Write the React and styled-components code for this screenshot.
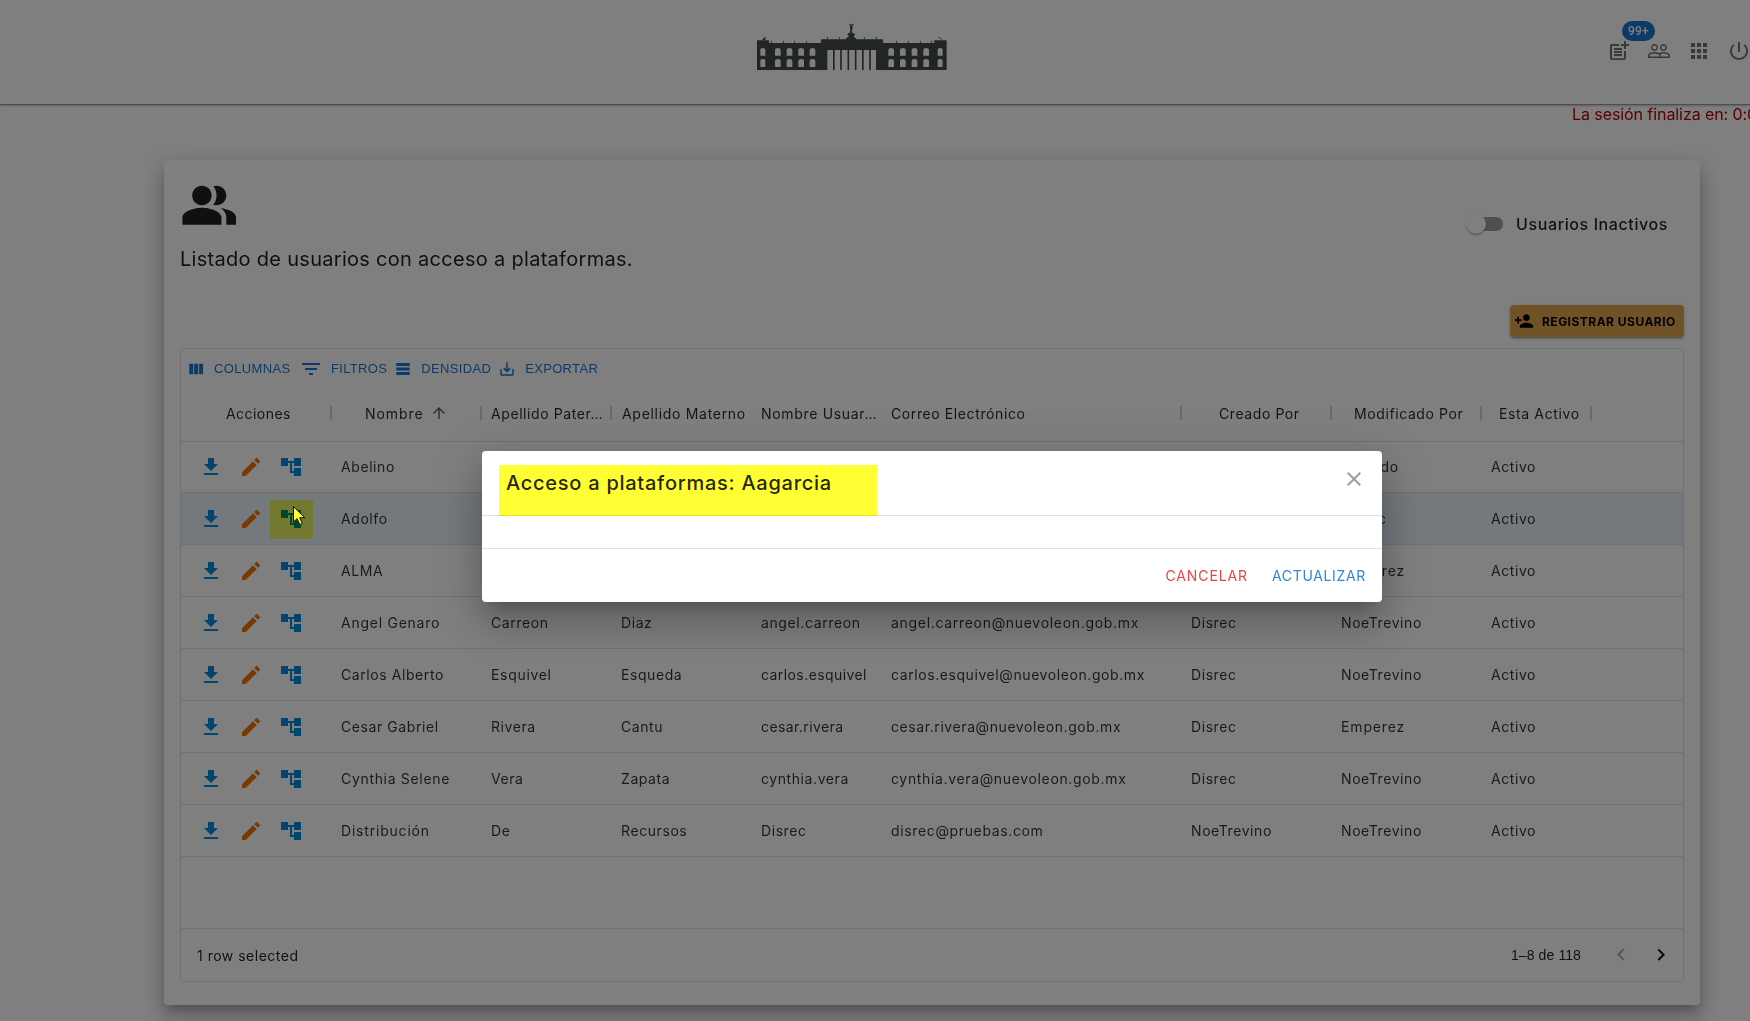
import React from "react";
import styled, { createGlobalStyle } from "styled-components";

const GlobalStyle = createGlobalStyle`
  *, *::before, *::after { box-sizing: border-box; }
  body {
    margin: 0;
    background: #fff;
    color: rgba(0, 0, 0, 0.87);
    font-family: Inter, "Open Sans", sans-serif;
    font-size: 14px;
    overflow: hidden;
  }
`;

const Page = styled.div`
  position: relative;
  width: 1750px;
  height: 1021px;
  overflow: hidden;
  background: #fff;
`;

const Header = styled.header`
  display: grid;
  grid-template-columns: 757px 190px 1fr;
  height: 105px;
  border-bottom: 1px solid #9a9a9a;
  box-shadow: 0 1px 2px rgba(0, 0, 0, 0.25);
`;

const LogoSlot = styled.div`
  grid-column: 2;
  padding-top: 22px;
  svg { display: block; }
`;

const HeaderTools = styled.nav`
  display: flex;
  gap: 16px;
  padding: 39px 0 0 660px;
  color: #757575;
`;

const Tool = styled.span`
  position: relative;
  flex: none;
  width: 24px;
  height: 24px;
`;

const Badge = styled.span`
  position: absolute;
  left: 15px;
  top: -18px;
  width: 33px;
  height: 20px;
  border-radius: 10px;
  background: #1976d2;
  color: #fff;
  font: 500 12px/20px Roboto, sans-serif;
  letter-spacing: 0.15px;
  text-align: center;
`;

const Glyph = styled.svg`
  display: block;
  flex: none;
  width: ${(p) => p.$size || 24}px;
  height: ${(p) => p.$size || 24}px;
  fill: currentColor;
  color: ${(p) => p.$color || "inherit"};
`;

const Session = styled.p`
  margin: 0 0 36px;
  padding-left: 1572px;
  height: 19px;
  font-size: 16px;
  line-height: 18px;
  letter-spacing: -0.08px;
  white-space: nowrap;
  overflow: hidden;
  color: #b50000;
`;

const Card = styled.main`
  display: flex;
  flex-direction: column;
  width: 1536px;
  height: 845px;
  margin-left: 164px;
  padding: 16px;
  border-radius: 4px;
  background: #fff;
  box-shadow: 0 7px 8px -4px rgba(0, 0, 0, 0.2), 0 12px 17px 2px rgba(0, 0, 0, 0.14),
    0 5px 22px 4px rgba(0, 0, 0, 0.12);
`;

const CardTop = styled.section`
  display: flex;
  justify-content: space-between;
  height: 129px;
`;

const Heading = styled.h1`
  margin: 8px 0 0;
  font-size: 20px;
  font-weight: 400;
  line-height: 32px;
  letter-spacing: 0.29px;
`;

const InactiveToggle = styled.label`
  display: flex;
  align-items: center;
  height: 20px;
  margin: 38px 16px 0 0;
  font-size: 16px;
  font-weight: 500;
  letter-spacing: 0.6px;
`;

const Track = styled.span`
  display: flex;
  align-items: center;
  width: 34px;
  height: 14px;
  margin-right: 13px;
  border-radius: 7px;
  background: #9e9e9e;
`;

const Thumb = styled.span`
  flex: none;
  width: 20px;
  height: 20px;
  margin-left: -3px;
  border-radius: 50%;
  background: #fff;
  box-shadow: 0 2px 1px -1px rgba(0, 0, 0, 0.2), 0 1px 1px rgba(0, 0, 0, 0.14),
    0 1px 3px rgba(0, 0, 0, 0.12);
`;

const RegisterButton = styled.button`
  display: flex;
  align-items: center;
  align-self: flex-end;
  gap: 8px;
  width: 174px;
  height: 32px;
  margin-bottom: 11px;
  padding: 0 0 0 4px;
  border: 0;
  border-radius: 4px;
  background: #dfa74f;
  color: #000;
  font: 700 12px Inter, sans-serif;
  letter-spacing: 0.48px;
  white-space: nowrap;
  box-shadow: 0 3px 1px -2px rgba(0, 0, 0, 0.2), 0 2px 2px rgba(0, 0, 0, 0.14),
    0 1px 5px rgba(0, 0, 0, 0.12);
`;

const Grid = styled.section`
  display: flex;
  flex-direction: column;
  height: 634px;
  border: 1px solid #e0e0e0;
  border-radius: 4px;
`;

const Toolbar = styled.div`
  display: flex;
  gap: 7px;
  height: 36px;
  padding: 4px 6px 0;
`;

const ToolbarButton = styled.button`
  display: flex;
  align-items: center;
  gap: ${(p) => p.$gap}px;
  height: 31px;
  margin-right: ${(p) => p.$trail || 0}px;
  padding: 0;
  border: 0;
  background: none;
  color: #1976d2;
  font: 13px "Liberation Sans", Arial, sans-serif;
  letter-spacing: 0.34px;
`;

const columns = "150px 150px 130px 140px 130px 300px 150px 150px 110px";

const HeadRow = styled.div`
  display: grid;
  grid-template-columns: ${columns};
  height: 57px;
  border-bottom: 1px solid #e0e0e0;
  font-weight: 430;
`;

const HeadCell = styled.div`
  display: flex;
  align-items: center;
  gap: 6px;
  height: 56px;
  padding-left: ${(p) => p.$indent}px;
  letter-spacing: ${(p) => p.$tracking}px;
  white-space: nowrap;
  color: rgba(0, 0, 0, 0.84);
  &::after {
    content: "";
    width: 2px;
    height: 14px;
    margin: 0 -1px 0 auto;
    background: #d2d2d2;
  }
`;

const Row = styled.div`
  display: grid;
  grid-template-columns: ${columns};
  align-items: center;
  height: 52px;
  margin-top: ${(p) => (p.$first ? -1 : 0)}px;
  border-bottom: 1px solid #e0e0e0;
  background: ${(p) => (p.$selected ? "rgba(25, 118, 210, 0.095)" : "none")};
`;

const Cell = styled.div`
  padding-left: 10px;
  letter-spacing: ${(p) => p.$tracking}px;
  white-space: nowrap;
  color: rgba(0, 0, 0, 0.8);
`;

const Actions = styled.div`
  display: flex;
  gap: 16px;
  padding-left: 18px;
`;

const Action = styled.span`
  width: 24px;
  height: 24px;
`;

const Footer = styled.footer`
  display: flex;
  align-items: center;
  height: 53px;
  margin-top: auto;
  padding: 0 10px 0 16px;
  border-top: 1px solid #e0e0e0;
`;

const Selected = styled.span`
  flex: 1;
  letter-spacing: 0.5px;
`;

const Range = styled.span`
  font: 14px "Liberation Sans", Arial, sans-serif;
  letter-spacing: 0.1px;
  margin-right: 28px;
`;

const Pager = styled.span`
  display: flex;
  gap: 16px;
  color: #111;
`;

const Backdrop = styled.div`
  position: absolute;
  inset: 0;
  background: rgba(0, 0, 0, 0.5);
`;

const Marker = styled.div`
  position: absolute;
  left: 270px;
  top: 500px;
  width: 43px;
  height: 39px;
  background: #ffff66;
  mix-blend-mode: multiply;
`;

const Pointer = styled.svg`
  position: absolute;
  left: 292px;
  top: 505px;
`;

const Dialog = styled.div`
  position: absolute;
  left: 482px;
  top: 451px;
  width: 900px;
  height: 151px;
  border-radius: 4px;
  background: #fff;
  box-shadow: 0 11px 15px -7px rgba(0, 0, 0, 0.2), 0 24px 38px 3px rgba(0, 0, 0, 0.14),
    0 9px 46px 8px rgba(0, 0, 0, 0.12);
`;

const DialogHead = styled.div`
  display: flex;
  justify-content: space-between;
  height: 65px;
  padding: 14px 16px 0 17px;
  border-bottom: 1px solid #e0e0e0;
`;

const DialogTitle = styled.h2`
  width: 378px;
  height: 51px;
  margin: 0;
  padding-left: 7px;
  background: #ffff33;
  border-bottom: 1px solid #e0e02d;
  font-size: 20px;
  font-weight: 500;
  line-height: 36px;
  letter-spacing: 0.74px;
  color: rgba(0, 0, 0, 0.87);
`;

const CloseButton = styled.button`
  height: 24px;
  margin-top: 2px;
  padding: 0;
  border: 0;
  background: none;
  color: #9e9e9e;
`;

const DialogBody = styled.div`
  height: 33px;
  border-bottom: 1px solid #e0e0e0;
`;

const DialogActions = styled.div`
  display: flex;
  justify-content: flex-end;
  align-items: center;
  gap: 24px;
  height: 53px;
  padding-right: 16px;
`;

const TextButton = styled.button`
  padding: 0;
  border: 0;
  background: none;
  font: 400 14px Inter, sans-serif;
  letter-spacing: ${(p) => p.$tracking}px;
  color: ${(p) => p.$color};
`;

const paths = {
  postAdd: "M17 19.22H5V7h7V5H5c-1.1 0-2 .9-2 2v12c0 1.1.9 2 2 2h12c1.1 0 2-.9 2-2v-7h-2v7.22z M19 2h-2v3h-3c.01.01 0 2 0 2h3v2.99c.01.01 2 0 2 0V7h3V5h-3V2zM7 9h8v2H7zM7 12v2h8v-2h-3zM7 15h8v2H7z",
  people: "M16.5 13c-1.2 0-3.07.34-4.5 1-1.43-.67-3.3-1-4.5-1C5.33 13 1 14.08 1 16.25V19h22v-2.75c0-2.17-4.33-3.25-6.5-3.25zm-4 4.5h-10v-1.25c0-.54 2.56-1.75 5-1.75s5 1.21 5 1.75v1.25zm9 0H14v-1.25c0-.46-.2-.86-.52-1.22.88-.3 1.96-.53 3.02-.53 2.44 0 5 1.21 5 1.75v1.25zM7.5 12c1.93 0 3.5-1.57 3.5-3.5S9.43 5 7.5 5 4 6.57 4 8.5 5.57 12 7.5 12zm0-5.5c1.1 0 2 .9 2 2s-.9 2-2 2-2-.9-2-2 .9-2 2-2zm9 5.5c1.93 0 3.5-1.57 3.5-3.5S18.43 5 16.5 5 13 6.57 13 8.5s1.57 3.5 3.5 3.5zm0-5.5c1.1 0 2 .9 2 2s-.9 2-2 2-2-.9-2-2 .9-2 2-2z",
  apps: "M4 8h4V4H4v4zm6 12h4v-4h-4v4zm-6 0h4v-4H4v4zm0-6h4v-4H4v4zm6 0h4v-4h-4v4zm6-10v4h4V4h-4zm-6 4h4V4h-4v4zm6 6h4v-4h-4v4zm0 6h4v-4h-4v4z",
  power: "M13 3h-2v10h2V3zm4.83 2.17l-1.42 1.42C17.99 7.86 19 9.81 19 12c0 3.87-3.13 7-7 7s-7-3.13-7-7c0-2.19 1.01-4.14 2.58-5.42L6.17 5.17C4.23 6.82 3 9.26 3 12c0 4.97 4.03 9 9 9s9-4.03 9-9c0-2.74-1.23-5.18-3.17-6.83z",
  group: "M16.67 13.13C18.04 14.06 19 15.32 19 17v3h4v-3c0-2.18-3.57-3.47-6.33-3.87zM15 12c2.21 0 4-1.79 4-4s-1.79-4-4-4c-.47 0-.91.1-1.33.24C14.5 5.27 15 6.58 15 8s-.5 2.73-1.33 3.76c.42.14.86.24 1.33.24zM9 12c2.21 0 4-1.79 4-4s-1.79-4-4-4-4 1.79-4 4 1.79 4 4 4zM9 13c-2.67 0-8 1.34-8 4v3h16v-3c0-2.66-5.33-4-8-4z",
  personAdd: "M15 12c2.21 0 4-1.79 4-4s-1.79-4-4-4-4 1.79-4 4 1.79 4 4 4zm-9-2V7H4v3H1v2h3v3h2v-3h3v-2H6zm9 4c-2.67 0-8 1.34-8 4v2h16v-2c0-2.66-5.33-4-8-4z",
  columns: "M8.33 19H3V5h5.33zM14.9 19H9.5V5h5.4zM21.5 19h-5.3V5h5.3z",
  filter: "M10 18h4v-2h-4v2zM3 6v2h18V6H3zm3 7h12v-2H6v2z",
  density: "M21 8H3V4h18v4zm0 2H3v4h18v-4zm0 6H3v4h18v-4z",
  save: "M19 12v7H5v-7H3v7c0 1.1.9 2 2 2h14c1.1 0 2-.9 2-2v-7h-2zm-6 .67l2.59-2.58L17 11.5l-5 5-5-5 1.41-1.41L11 12.67V3h2z",
  up: "M4 12l1.41 1.41L11 7.83V20h2V7.83l5.58 5.59L20 12l-8-8-8 8z",
  download: "M19 9h-4V3H9v6H5l7 7 7-7zM5 18v2h14v-2H5z",
  edit: "M3 17.25V21h3.75L17.81 9.94l-3.75-3.75L3 17.25zM20.71 7.04c.39-.39.39-1.02 0-1.41l-2.34-2.34c-.39-.39-1.02-.39-1.41 0l-1.83 1.83 3.75 3.75 1.83-1.83z",
  tree: "M22 11V3h-7v3H9V3H2v8h7V8h2v10h4v3h7v-8h-7v3h-2V8h2v3z",
  left: "M15.41 16.09l-4.58-4.59 4.58-4.59L14 5.5l-6 6 6 6z",
  right: "M8.59 16.34l4.58-4.59-4.58-4.59L10 5.75l6 6-6 6z",
  close: "M19 6.41L17.59 5 12 10.59 6.41 5 5 6.41 10.59 12 5 17.59 6.41 19 12 13.41 17.59 19 19 17.59 13.41 12z",
};

const Icon = ({ name, size, color }) => (
  <Glyph viewBox="0 0 24 24" $size={size} $color={color} aria-hidden="true">
    <path d={paths[name]} />
  </Glyph>
);

const arch = (x, y, w, h) =>
  `M${x} ${y + h}V${y + 5}Q${x} ${y} ${x + w / 2} ${y}Q${x + w} ${y} ${x + w} ${y + 5}V${y + h}Z`;

function PalaceLogo() {
  const bays = [61, 105, 140, 175, 209, 445, 480, 515, 550, 593];
  const windows = bays
    .map((x) => {
      const w = x === 61 || x === 593 ? 15 : 17;
      return arch(x, 114, w, 23) + arch(x, 147, w, 24);
    })
    .join("");
  const columnEdges = [284.5, 306, 328, 350, 371.5, 393];
  const walls =
    "M51 91H87V99H243V88H429V99H583V91H620V180H408V120H262V180H51Z";
  return (
    <svg width="190" height="49" viewBox="51 36 570 147" role="img">
      <g fill="#454b4c">
        <path fillRule="evenodd" d={walls + windows} />
        {columnEdges.map((x) => (
          <rect key={x} x={x - 5.5} y="119" width="5" height="61" />
        ))}
        <path d="M317 89l4-7h5l-1-6-3-1 2-5 5-1 2-8-1-8 1-5-4-5 1-1 6 2 4-2 4-1-2 4-3 3 1 5-2 8 1 8 5 1 4 4-4 3v5l6 3 3 8Z" />
        <path d="M66 91l4-6 6-4 2 2-3 4 2 4ZM605 91l-4-5-7-4 1-1 6 2 4 5Z" />
        {[94, 130, 164, 199, 470, 505, 541, 575].map((x) => (
          <rect key={x} x={x - 1.2} y="92" width="2.4" height="8" />
        ))}
        {[262, 298, 373, 409].map((x) => (
          <rect key={x} x={x - 1.2} y="81" width="2.4" height="8" />
        ))}
      </g>
    </svg>
  );
}

const headers = [
  { label: "Acciones", indent: 45, tracking: 0.45 },
  { label: "Nombre", indent: 34, tracking: 0.95, sorted: true },
  { label: "Apellido Pater…", indent: 10, tracking: 0.58 },
  { label: "Apellido Materno", indent: 11, tracking: 0.7 },
  { label: "Nombre Usuar…", indent: 10, tracking: 0.68 },
  { label: "Correo Electrónico", indent: 10, tracking: 0.6 },
  { label: "Creado Por", indent: 38, tracking: 0.58 },
  { label: "Modificado Por", indent: 23, tracking: 0.6 },
  { label: "Esta Activo", indent: 18, tracking: 0.62 },
];

const tracking = {
  "Angel Genaro": 0.74,
  "angel.carreon@nuevoleon.gob.mx": 0.69,
  "angel.carreon": 0.62,
  "carlos.esquivel": 0.42,
  Emperez: 0.85,
  Esquivel: 0.68,
  "Distribución": 0.8,
  "Cynthia Selene": 0.68,
  "cynthia.vera@nuevoleon.gob.mx": 0.65,
  "cesar.rivera": 0.4,
  "disrec@pruebas.com": 0.64,
};

const rows = [
  ["Abelino", "", "", "", "", "", "Salgado"],
  ["Adolfo", "", "", "", "", "", "Disrec"],
  ["ALMA", "", "", "", "", "", "Emperez"],
  ["Angel Genaro", "Carreon", "Diaz", "angel.carreon", "angel.carreon@nuevoleon.gob.mx", "Disrec", "NoeTrevino"],
  ["Carlos Alberto", "Esquivel", "Esqueda", "carlos.esquivel", "carlos.esquivel@nuevoleon.gob.mx", "Disrec", "NoeTrevino"],
  ["Cesar Gabriel", "Rivera", "Cantu", "cesar.rivera", "cesar.rivera@nuevoleon.gob.mx", "Disrec", "Emperez"],
  ["Cynthia Selene", "Vera", "Zapata", "cynthia.vera", "cynthia.vera@nuevoleon.gob.mx", "Disrec", "NoeTrevino"],
  ["Distribución", "De", "Recursos", "Disrec", "disrec@pruebas.com", "NoeTrevino", "NoeTrevino"],
];

export default function App() {
  return (
    <Page>
      <GlobalStyle />
      <Header>
        <LogoSlot><PalaceLogo /></LogoSlot>
        <HeaderTools>
          <Tool><Icon name="postAdd" /><Badge>99+</Badge></Tool>
          <Tool><Icon name="people" /></Tool>
          <Tool><Icon name="apps" /></Tool>
          <Tool><Icon name="power" /></Tool>
        </HeaderTools>
      </Header>
      <Session>La sesión finaliza en: 0:00</Session>

      <Card>
        <CardTop>
          <div>
            <Icon name="group" size={58.5} color="#212121" />
            <Heading>Listado de usuarios con acceso a plataformas.</Heading>
          </div>
          <InactiveToggle>
            <Track><Thumb /></Track>
            Usuarios Inactivos
          </InactiveToggle>
        </CardTop>
        <RegisterButton>
          <Icon name="personAdd" size={20} />
          REGISTRAR USUARIO
        </RegisterButton>

        <Grid>
          <Toolbar>
            <ToolbarButton $gap={9} $trail={1.5}><Icon name="columns" size={18} />COLUMNAS</ToolbarButton>
            <ToolbarButton $gap={8}><Icon name="filter" size={24} />FILTROS</ToolbarButton>
            <ToolbarButton $gap={9}><Icon name="density" size={18} />DENSIDAD</ToolbarButton>
            <ToolbarButton $gap={9}><Icon name="save" size={18} />EXPORTAR</ToolbarButton>
          </Toolbar>
          <HeadRow>
            {headers.map((h) => (
              <HeadCell key={h.label} $indent={h.indent} $tracking={h.tracking}>
                {h.label}
                {h.sorted && <Icon name="up" size={18} color="#616161" />}
              </HeadCell>
            ))}
          </HeadRow>
          {rows.map((r, i) => (
            <Row key={r[0]} $first={i === 0} $selected={i === 1}>
              <Actions>
                <Action><Icon name="download" color="#028edb" /></Action>
                <Action><Icon name="edit" color="#f27405" /></Action>
                <Action><Icon name="tree" color="#028edb" /></Action>
              </Actions>
              {r.map((value, c) => (
                <Cell key={c} $tracking={tracking[value] || 0.58}>{value}</Cell>
              ))}
              <Cell $tracking={0.58}>Activo</Cell>
            </Row>
          ))}
          <Footer>
            <Selected>1 row selected</Selected>
            <Range>1–8 de 118</Range>
            <Pager>
              <Icon name="left" color="#b0b0b0" />
              <Icon name="right" />
            </Pager>
          </Footer>
        </Grid>
      </Card>

      <Backdrop />
      <Marker />
      <Dialog role="dialog">
        <DialogHead>
          <DialogTitle>Acceso a plataformas: Aagarcia</DialogTitle>
          <CloseButton><Icon name="close" /></CloseButton>
        </DialogHead>
        <DialogBody />
        <DialogActions>
          <TextButton $color="#e04848" $tracking={0.9}>CANCELAR</TextButton>
          <TextButton $color="#2f86dc" $tracking={0.66}>ACTUALIZAR</TextButton>
        </DialogActions>
      </Dialog>
      <Pointer width="14" height="22" viewBox="0 0 14 22">
        <path d="M1.5 1.5V17l3.6-3.4 2.6 6 2.6-1.1-2.6-5.8h5Z" fill="#ffff33" stroke="#111" strokeWidth="1" />
      </Pointer>
    </Page>
  );
}
